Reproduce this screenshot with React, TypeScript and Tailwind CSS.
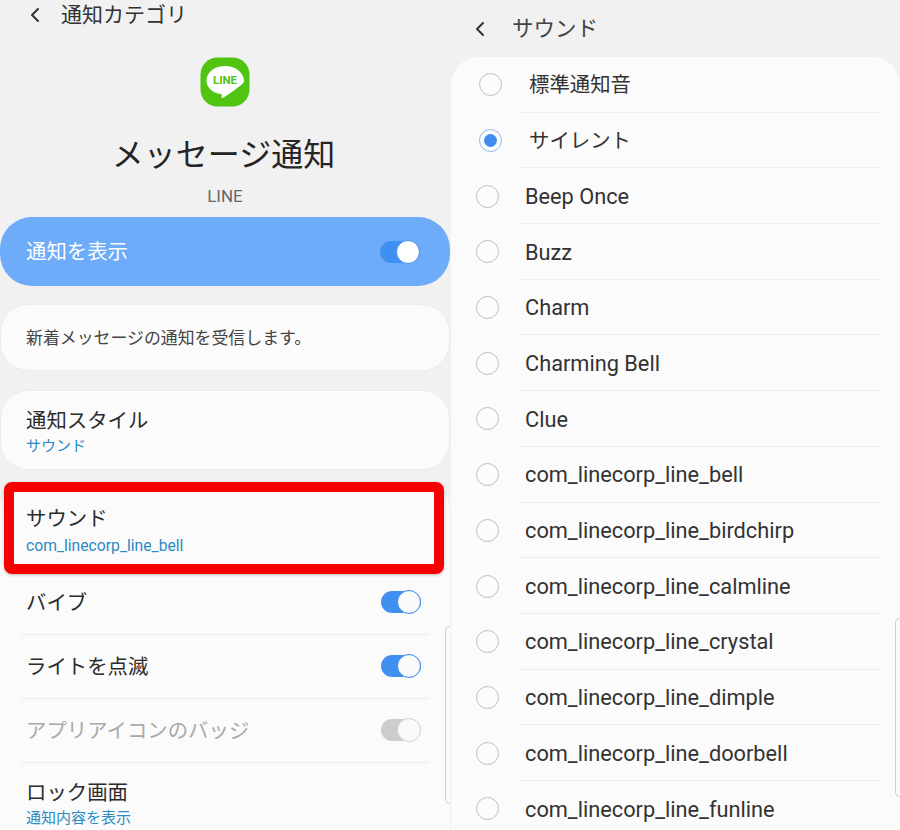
import React from 'react';
import { ChevronLeft } from 'lucide-react';

const sounds = [
  'Beep Once',
  'Buzz',
  'Charm',
  'Charming Bell',
  'Clue',
  'com_linecorp_line_bell',
  'com_linecorp_line_birdchirp',
  'com_linecorp_line_calmline',
  'com_linecorp_line_crystal',
  'com_linecorp_line_dimple',
  'com_linecorp_line_doorbell',
  'com_linecorp_line_funline',
];

const Toggle = ({ disabled = false, onBlue = false }: { disabled?: boolean; onBlue?: boolean }) => (
  <div className={`relative h-[22px] w-[40px] rounded-full ${disabled ? 'bg-[#cccccc]' : 'bg-[#4090f2]'}`}>
    <div
      className={`absolute right-0 top-[-1px] h-[24px] w-[24px] rounded-full border-[1.5px] ${
        disabled ? 'border-[#d4d4d4] bg-[#fafafa]' : onBlue ? 'border-[#4090f2] bg-white' : 'border-[#3a8aea] bg-[#fafafa]'
      }`}
    />
  </div>
);

const LineLogo = () => (
  <svg width="50" height="50" viewBox="0 0 50 50">
    <rect x="0.5" y="0.5" width="49" height="49" rx="17" fill="#50c410" />
    <path
      d="M25 9c-10 0-18.500 6-18.500 14.500 0 7 6 12.500 14.300 13.500 1.200.2 1.100 1 .9 2.200-.1.700-.4 2.500.9 1.800 1.600-.9 8.800-5.300 13.200-9 4.400-3 8.200-5.200 8.200-8.500C43.500 15 35 9 25 9z"
      fill="#ffffff"
    />
    <text x="25" y="27" textAnchor="middle" fontSize="11.500" fontWeight="700" fill="#50c410" fontFamily="Roboto, sans-serif">
      LINE
    </text>
  </svg>
);

const Radio = ({ checked = false }: { checked?: boolean }) => (
  <div
    className={`flex h-[23px] w-[23px] shrink-0 items-center justify-center rounded-full border-[1.5px] bg-[#fcfcfc] ${
      checked ? 'border-[#8fb9e8]' : 'border-[#bdbdbd]'
    }`}
  >
    {checked && <div className="h-[13px] w-[13px] rounded-full bg-[#3f8ff0]" />}
  </div>
);

const SwitchRow = ({ label, disabled = false }: { label: string; disabled?: boolean }) => (
  <div className="mx-[21px] flex h-[64px] items-center justify-between border-b border-[#ececec] pb-[1px] pl-[5px] pr-[8px]">
    <span className={`pt-[2px] text-[20.400px] leading-none ${disabled ? 'text-[#a9a9a9]' : 'text-[#2b2b2b]'}`}>{label}</span>
    <Toggle disabled={disabled} />
  </div>
);

const SoundRow = ({
  label,
  checked = false,
  shifted = false,
  last = false,
}: {
  label: string;
  checked?: boolean;
  shifted?: boolean;
  last?: boolean;
}) => (
  <div className="flex h-[55.700px] shrink-0 items-stretch">
    <div className={`flex items-center justify-center ${shifted ? 'w-[67px] pl-[11px]' : 'w-[67px] pl-[5px]'}`}>
      <Radio checked={checked} />
    </div>
    <div
      className={`mr-[20px] flex flex-1 items-center pt-[2px] leading-none text-[#333333] ${
        last ? '' : 'border-b border-[#ececec]'
      } ${shifted ? 'pl-[11px] text-[20.400px]' : 'pl-[7px] text-[21.750px]'}`}
    >
      {label}
    </div>
  </div>
);

export default function App() {
  return (
    <div className="flex h-[830px] w-[900px] overflow-hidden bg-[#f1f1f1] font-['Roboto','Noto_Sans_CJK_JP',sans-serif]">
      {/* 通知カテゴリ */}
      <div className="relative flex h-[830px] w-[450px] shrink-0 flex-col">
        <div className="flex h-[28px] items-center pl-[23px] pt-[2px]">
          <ChevronLeft className="h-[24px] w-[24px] text-[#333333]" strokeWidth={2} />
          <span className="ml-[14px] text-[21px] leading-none text-[#333333]">通知カテゴリ</span>
        </div>

        <div className="mt-[29px] flex justify-center">
          <LineLogo />
        </div>
        <div className="mt-[26px] pr-[3px] text-center text-[32px] leading-[44px] text-[#252525]">メッセージ通知</div>
        <div className="mt-[9px] text-center text-[17px] leading-[20px] text-[#666666]">LINE</div>

        <div className="mt-[11px] flex h-[69px] items-center justify-between rounded-[32px] bg-[#6eabf9] pl-[26px] pr-[30px]">
          <span className="pt-[2px] text-[20.400px] leading-none text-white">通知を表示</span>
          <Toggle onBlue />
        </div>

        <div className="mt-[18px] flex h-[67px] items-center rounded-[28px] border border-[#ececec] bg-[#fbfbfb] pl-[25px] pt-[2px]">
          <span className="text-[16.900px] leading-none text-[#444444]">新着メッセージの通知を受信します。</span>
        </div>

        <div className="mt-[19px] flex h-[80px] flex-col justify-center rounded-[28px] border border-[#ececec] bg-[#fbfbfb] pl-[25px] pt-[2px]">
          <span className="text-[20.400px] leading-[30px] text-[#2b2b2b]">通知スタイル</span>
          <span className="text-[15px] leading-[20px] text-[#2b8ac6]">サウンド</span>
        </div>

        <div className="mt-[12px] flex-1 rounded-t-[28px] bg-[#fbfbfb]">
          <div className="flex h-[89px] flex-col justify-center pl-[26px] pt-[6px]">
            <span className="pt-[2px] text-[20.400px] leading-[29px] text-[#2b2b2b]">サウンド</span>
            <span className="text-[15.700px] leading-[23px] text-[#2b8ac6]">com_linecorp_line_bell</span>
          </div>
          <SwitchRow label="バイブ" />
          <SwitchRow label="ライトを点滅" />
          <SwitchRow label="アプリアイコンのバッジ" disabled />
          <div className="flex flex-col pl-[26px] pt-[16px]">
            <span className="text-[20.400px] leading-[28px] text-[#2b2b2b]">ロック画面</span>
            <span className="text-[15px] leading-[22px] text-[#2b8ac6]">通知内容を表示</span>
          </div>
        </div>

        {/* overlays: red highlight and scroll handle */}
        <div className="absolute left-[4px] top-[482px] h-[92px] w-[440px] rounded-[8px] border-[10px] border-[#f60000] shadow-[0_1px_3px_rgba(0,0,0,0.25)]" />
        <div className="absolute left-[445px] top-[626px] h-[178px] w-[5px] rounded-l-[6px] border-y border-l border-[#cfcfcf]" />
      </div>

      {/* サウンド */}
      <div className="relative flex h-[830px] w-[450px] shrink-0 flex-col">
        <div className="flex h-[57px] shrink-0 items-center pl-[18px]">
          <ChevronLeft className="h-[24px] w-[24px] text-[#333333]" strokeWidth={2} />
          <span className="ml-[20px] text-[21.500px] leading-none text-[#444444]">サウンド</span>
        </div>
        <div className="ml-[1px] flex-1 overflow-hidden rounded-t-[28px] bg-[#fbfbfb]">
          <SoundRow label="標準通知音" shifted />
          <SoundRow label="サイレント" shifted checked />
          {sounds.map((s, i) => (
            <SoundRow key={s} label={s} last={i === sounds.length - 1} />
          ))}
        </div>
        <div className="absolute left-[445px] top-[618px] h-[179px] w-[5px] rounded-l-[6px] border-y border-l border-[#cfcfcf]" />
      </div>
    </div>
  );
}
